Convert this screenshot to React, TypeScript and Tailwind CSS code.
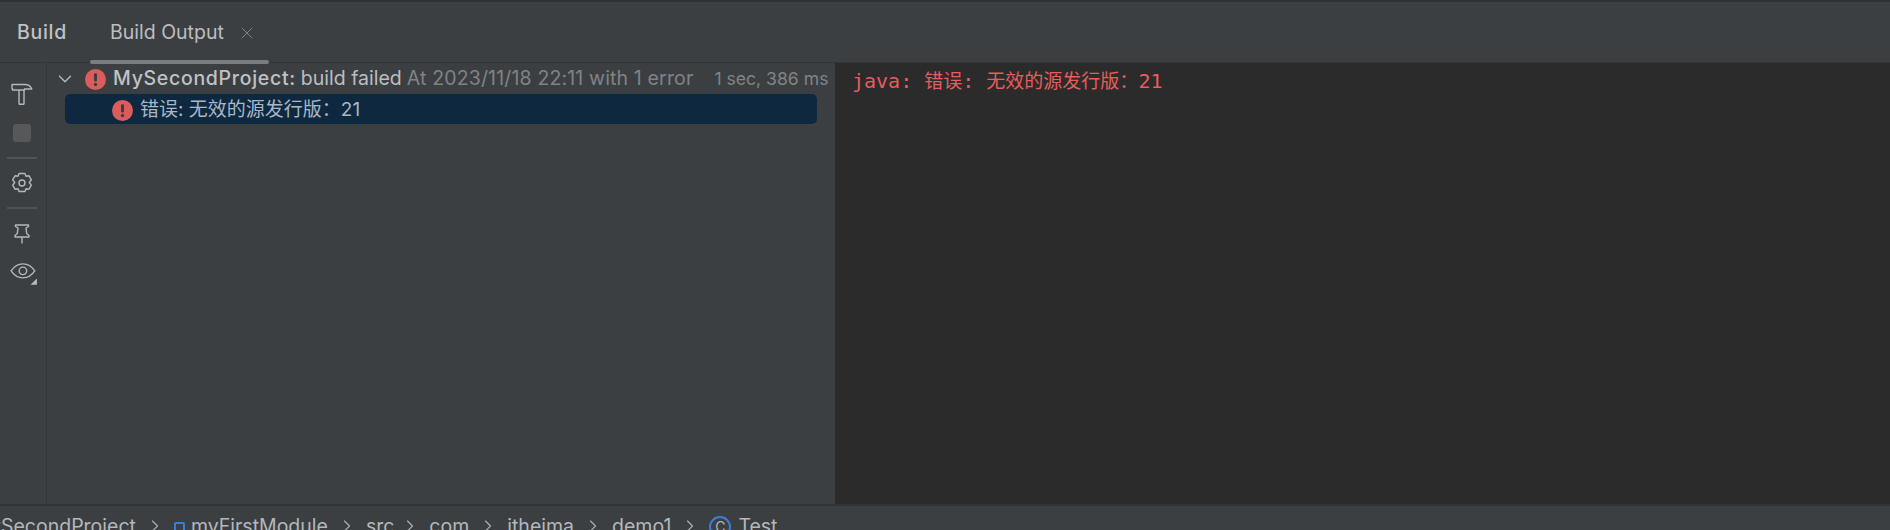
import { ChevronDown, ChevronRight, X } from 'lucide-react';

const uiFont = "font-['Inter','Noto_Sans_CJK_SC',sans-serif]";

function ErrorIcon({ size }: { size: number }) {
  return (
    <svg width={size} height={size} viewBox="0 0 20 20" className="shrink-0">
      <circle cx="10" cy="10" r="10" fill="#db5c5c" />
      <rect x="8.600" y="4" width="2.800" height="8" rx="1" fill="#3c3f41" />
      <circle cx="10" cy="14.800" r="1.600" fill="#3c3f41" />
    </svg>
  );
}

function HammerIcon() {
  return (
    <svg width="22" height="24" viewBox="0 0 22 24" fill="none" stroke="#b4b8bc" strokeWidth="1.4" strokeLinejoin="round">
      <path d="M1 2.500h13c3 0 5.500 1.500 6.800 4.500h-7.300v1H1.500V6.500H1z" />
      <path d="M8 8v13.500c0 .5.300.8.800.8h3.400c.5 0 .8-.3.800-.8V8" />
    </svg>
  );
}

function GearIcon() {
  return (
    <svg width="20" height="22" viewBox="0 0 20 22" fill="none" stroke="#b4b8bc" strokeWidth="1.4" strokeLinejoin="round">
      <path d="M7 1.500h6l1 2.800 3-.5 2.300 4-2 2.700 2 2.700-2.300 4-3-.5-1 2.800H7l-1-2.800-3 .5-2.300-4 2-2.700-2-2.700 2.300-4 3 .5z" />
      <circle cx="10" cy="11" r="3" />
    </svg>
  );
}

function PinIcon() {
  return (
    <svg width="16" height="20" viewBox="0 0 16 20" fill="none" stroke="#b4b8bc" strokeWidth="1.4" strokeLinejoin="round">
      <path d="M1.500 1h13v1.500L12 4l.7 5.500L15 11.500V13H1v-1.500L3.300 9.500 4 4 1.500 2.500z" />
      <path d="M8 13v6.500" />
    </svg>
  );
}

function EyeIcon() {
  return (
    <svg width="28" height="26" viewBox="0 0 26 24" fill="none">
      <path d="M1 10c3-4.500 7-6.500 11-6.500S20 5.500 23 10c-3 4.500-7 6.500-11 6.500S4 14.500 1 10z" stroke="#b4b8bc" strokeWidth="1.3" />
      <circle cx="12" cy="10" r="3.500" stroke="#b4b8bc" strokeWidth="1.3" />
      <path d="M25 17v6h-6z" fill="#b4b8bc" />
    </svg>
  );
}

function Sep() {
  return <ChevronRight size={20} strokeWidth={1.4} className="mx-[9px] mt-[2px] shrink-0 text-[#a9adb0]" />;
}

export default function App() {
  return (
    <div className={`flex h-[530px] w-[1890px] flex-col overflow-hidden bg-[#3c3f41] ${uiFont}`}>
      {/* Header */}
      <div className="h-[2px] shrink-0 bg-[#2f3133]" />
      <div className="flex h-[61px] shrink-0 items-center border-b border-[#323436] pt-[2px]">
        <span className="ml-[17px] w-[73px] text-[19.5px] font-medium tracking-[0.7px] text-[#bfc2c5]">Build</span>
        <div className="relative flex h-full items-center pr-[12px] pl-[20px]">
          <span className="text-[19.500px] text-[#bbbec1]">Build Output</span>
          <X size={20} strokeWidth={1.1} className="ml-[13px] text-[#85898c]" />
          <div className="absolute right-0 bottom-[-2px] left-0 h-[4px] rounded-full bg-[#7b7e81]" />
        </div>
      </div>

      {/* Main */}
      <div className="flex min-h-0 flex-1">
        <div className="flex w-[47px] shrink-0 flex-col items-center border-r border-[#323436] pt-[19px] pr-[2px]">
          <HammerIcon />
          <div className="mt-[18px] h-[18px] w-[18px] rounded-[3px] bg-[#565859]" />
          <div className="mt-[15px] h-[2px] w-[30px] bg-[#505356]" />
          <div className="mt-[13px]"><GearIcon /></div>
          <div className="mt-[13px] h-[2px] w-[30px] bg-[#505356]" />
          <div className="mt-[15px]"><PinIcon /></div>
          <div className="mt-[16px] ml-[4px]"><EyeIcon /></div>
        </div>

        <div className="w-[788px] shrink-0 pt-[1px]">
          <div className="flex h-[30px] items-center whitespace-nowrap text-[19.5px]">
            <ChevronDown size={22} strokeWidth={1.5} className="ml-[7px] text-[#b4b8bc]" />
            <div className="ml-[9px]"><ErrorIcon size={21} /></div>
            <span className="ml-[7px] font-medium tracking-[0.7px] text-[#bfc2c5]">MySecondProject:</span>
            <span className="ml-[5px] text-[#bbbec1]">build failed</span>
            <span className="ml-[5px] tracking-[0.15px] text-[#808386]">At 2023/11/18 22:11 with 1 error</span>
            <span className="ml-[21px] text-[17.6px] text-[#808386]">1 sec, 386 ms</span>
          </div>
          <div className="ml-[18px] flex h-[30px] w-[752px] items-center rounded-[5px] bg-[#0e293f] pt-[2px] pl-[47px] text-[19px] text-[#a9b7c6]">
            <div className="mr-[7px]"><ErrorIcon size={21} /></div>
            <span>错误: 无效的源发行版：21</span>
          </div>
        </div>

        <div className="min-w-0 flex-1 bg-[#2b2b2b] pt-[5px] pl-[17px] font-['DejaVu_Sans_Mono','Noto_Sans_CJK_SC',monospace] text-[20px] leading-[26px] text-[#e85c5c]">
          java: <span className="text-[19px]">错误</span>: <span className="text-[19px]">无效的源发行版：</span>21
        </div>
      </div>

      {/* Breadcrumb */}
      <div className="h-[2px] shrink-0 bg-[#323436]" />
      <div className="flex h-[24px] shrink-0 items-start overflow-hidden whitespace-nowrap pt-[8px] text-[19.5px] leading-[24px] text-[#b4b8bc]">
        <span className="-ml-[10px]">ySecondProject</span>
        <Sep />
        <span className="mr-[6px] mt-[8px] h-[12px] w-[11px] shrink-0 rounded-[2px] border-2 border-[#3d7dd8]" />
        <span>myFirstModule</span>
        <Sep />
        <span className="-mr-[3px]">src</span>
        <Sep />
        <span>com</span>
        <Sep />
        <span>itheima</span>
        <Sep />
        <span>demo1</span>
        <Sep />
        <span className="mr-[7px] mt-[2px] flex h-[22px] w-[22px] shrink-0 items-center justify-center rounded-full border-2 border-[#3d7dd8] text-[14px] text-[#b4b8bc]">C</span>
        <span>Test</span>
      </div>
    </div>
  );
}
